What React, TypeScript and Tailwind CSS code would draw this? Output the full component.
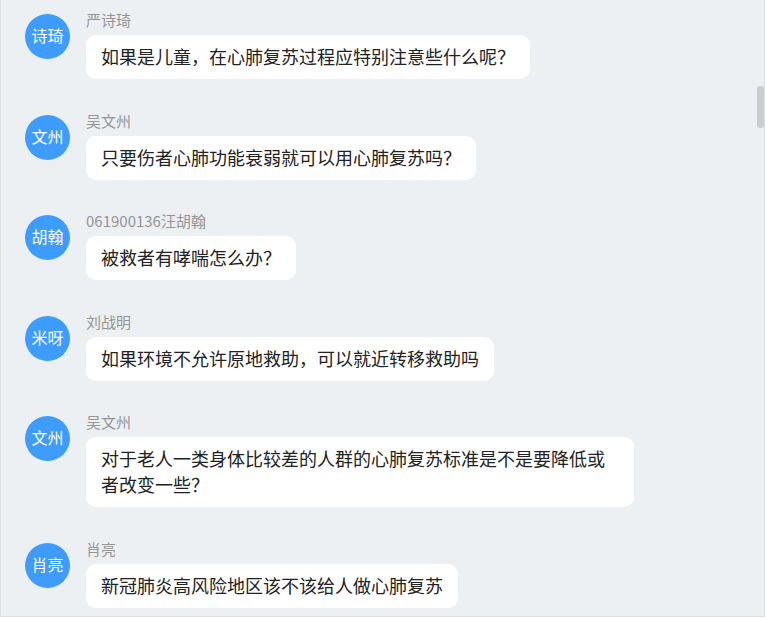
import React from "react";

const messages = [
  { avatar: "诗琦", name: "严诗琦", text: "如果是儿童，在心肺复苏过程应特别注意些什么呢？" },
  { avatar: "文州", name: "吴文州", text: "只要伤者心肺功能衰弱就可以用心肺复苏吗？" },
  { avatar: "胡翰", name: "061900136汪胡翰", text: "被救者有哮喘怎么办？" },
  { avatar: "米呀", name: "刘战明", text: "如果环境不允许原地救助，可以就近转移救助吗" },
  { avatar: "文州", name: "吴文州", text: "对于老人一类身体比较差的人群的心肺复苏标准是不是要降低或者改变一些？" },
  { avatar: "肖亮", name: "肖亮", text: "新冠肺炎高风险地区该不该给人做心肺复苏" },
];

export default function App() {
  return (
    <div
      className="relative w-[765px] h-[617px] overflow-hidden border-l border-r border-b border-[#dcdfe4] bg-[#edf0f3]"
      style={{ fontFamily: '"Noto Sans CJK SC", "Noto Sans", sans-serif' }}
    >
      <div className="flex flex-col gap-[35.5px] pt-[14px] pl-[24px]">
        {messages.map((m, i) => (
          <div key={i} className="flex items-start">
            <div className="flex h-[45px] w-[45px] shrink-0 items-center justify-center rounded-full bg-[#3d9cfd] pb-[3px] text-[16px] leading-none text-white">
              {m.avatar}
            </div>
            <div className="ml-[16px] flex flex-col items-start">
              <div className="-mt-[2px] text-[15px] leading-[16px] text-[#959595]">{m.name}</div>
              <div className="mt-[7px] max-w-[548px] rounded-[10px] bg-white px-[15px] pt-[8px] pb-[10px] text-[18px] leading-[26px] text-[#222]">
                {m.text}
              </div>
            </div>
          </div>
        ))}
      </div>
      <div className="absolute left-[756px] top-[86px] h-[42px] w-[7px] rounded-[3px] bg-[#cacdd1]" />
    </div>
  );
}
